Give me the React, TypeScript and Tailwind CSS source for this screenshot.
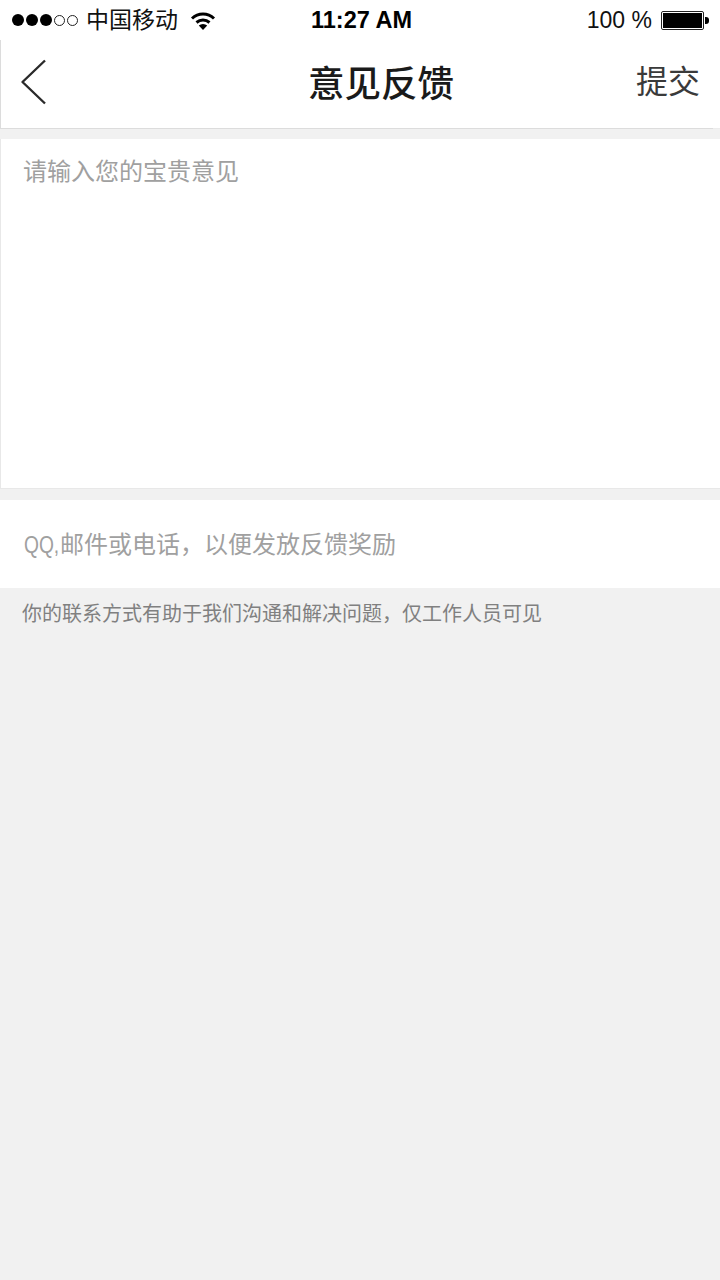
const cjk = "font-['Liberation_Sans','Noto_Sans_CJK_SC',sans-serif]";

function Dots() {
  return (
    <div className="flex items-center gap-[2px]">
      {[0, 1, 2].map((i) => (
        <span key={i} className="w-[12px] h-[12px] rounded-full bg-black" />
      ))}
      {[0, 1].map((i) => (
        <span key={i} className="w-[11px] h-[11px] rounded-full border border-[#222] bg-white" />
      ))}
    </div>
  );
}

function Wifi() {
  return (
    <svg width="26" height="20" viewBox="0 0 26 20" fill="none" stroke="#000" strokeWidth="3">
      <path d="M2 7.5 A16 16 0 0 1 24 7.5" />
      <path d="M6.5 11.5 A10 10 0 0 1 19.5 11.5" />
      <path d="M13 19 L8.8 14.6 A6 6 0 0 1 17.2 14.6 Z" fill="#000" stroke="none" />
    </svg>
  );
}

function Battery() {
  return (
    <div className="flex items-center">
      <div className="w-[43px] h-[19px] rounded-[2px] border border-[#222] p-[1px] bg-white">
        <div className="w-full h-full bg-black" />
      </div>
      <div className="w-[4px] h-[7px] ml-[1px] bg-black rounded-r-[3px]" />
    </div>
  );
}

export default function App() {
  return (
    <div className={`w-[720px] h-[1280px] bg-[#f1f1f1] flex flex-col overflow-hidden ${cjk}`}>
      <div className="h-[40px] bg-white flex items-center justify-between pl-[12px] pr-[11px] relative">
        <div className="flex items-center">
          <Dots />
          <span className="ml-[8px] text-[23px] text-[#111] leading-none">中国移动</span>
          <span className="ml-[12px] flex mt-[1px]"><Wifi /></span>
        </div>
        <span className="absolute left-[311px] top-[7px] text-[23.5px] leading-[27px] font-bold text-black">11:27 AM</span>
        <div className="flex items-center">
          <span className="text-[23px] leading-none text-[#111]">100 %</span>
          <span className="ml-[9px] flex"><Battery /></span>
        </div>
      </div>
      <div className="h-[89px] bg-white border-l border-b border-[#dcdcdc] flex items-center justify-between pl-[19px] pr-[20px] relative">
        <svg width="28" height="46" viewBox="0 0 28 46" fill="none" stroke="#2a2a2a" strokeWidth="2.4" strokeLinejoin="round" className="-mt-[4px]">
          <path d="M25 1.5 L2.5 23 L25 44.5" />
        </svg>
        <span className="absolute left-[307px] top-[24px] text-[36.5px] leading-[42px] font-medium text-[#1a1a1a]">意见反馈</span>
        <span className="text-[32px] leading-none text-[#3a3a3a] -mt-[5px]">提交</span>
        <span className="absolute right-0 bottom-[-1px] w-[7px] h-px bg-[#ececec]" />
      </div>
      <div className="mt-[10px] h-[350px] bg-white border-l border-b border-[#e8e8e8] pl-[22px] pt-[19px]">
        <span className="block text-[24px] leading-[28px] text-[#a0a0a0]">请输入您的宝贵意见</span>
      </div>
      <div className="mt-[11px] h-[88px] bg-white flex items-center pl-[24px]">
        <span className="mt-[2px] text-[24px] leading-[28px] text-[#a0a0a0]">
          <span className="inline-block w-[36px] origin-left scale-x-[0.8]">QQ,</span>
          邮件或电话，以便发放反馈奖励
        </span>
      </div>
      <div className="pl-[22px] pt-[13px]">
        <span className="block text-[20px] leading-[26px] text-[#808080]">你的联系方式有助于我们沟通和解决问题，仅工作人员可见</span>
      </div>
    </div>
  );
}
